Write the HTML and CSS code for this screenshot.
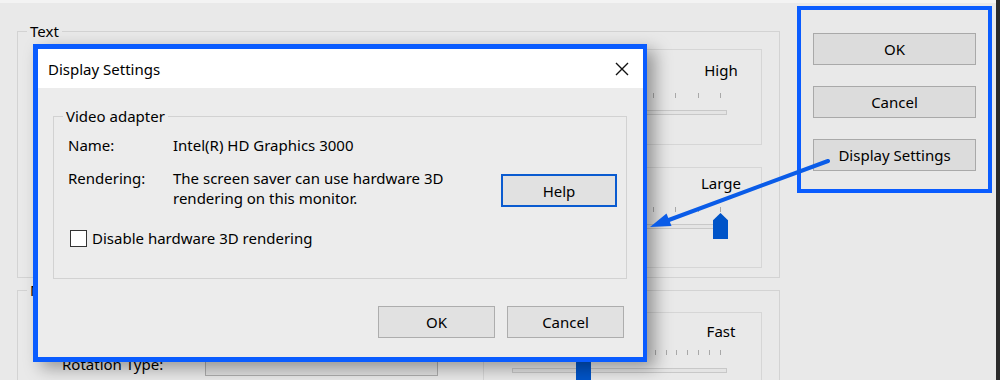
FILE: index.html
```html
<!DOCTYPE html>
<html lang="en">
<head>
<meta charset="utf-8">
<title>Display Settings</title>
<link rel="stylesheet" href="styles.css">
</head>
<body>
<div class="screen">
  <div class="window">
    <div class="main">
      <fieldset class="grp grp-text">
        <legend>Text</legend>
        <div class="grp-col">
          <fieldset class="sub sub-res">
            <legend>Resolution</legend>
            <div class="slider">
              <div class="sl-label">High</div>
              <div class="ticks"></div>
              <div class="track"></div>
            </div>
          </fieldset>
          <fieldset class="sub sub-size">
            <legend>Size</legend>
            <div class="slider">
              <div class="sl-label">Large</div>
              <div class="ticks"></div>
              <div class="track"><span class="thumb thumb-size"></span></div>
            </div>
          </fieldset>
        </div>
      </fieldset>
      <fieldset class="grp grp-motion">
        <legend>Motion</legend>
        <div class="motion-row">
          <div class="rotation">
            <span class="rot-label">Rotation Type:</span>
            <span class="combo"></span>
          </div>
          <fieldset class="sub sub-fast">
            <legend>Speed</legend>
            <div class="slider">
              <div class="sl-label">Fast</div>
              <div class="ticks ticks-fine"></div>
              <div class="track"><span class="thumb thumb-fast"></span></div>
            </div>
          </fieldset>
        </div>
      </fieldset>
    </div>
    <div class="actions">
      <button class="btn">OK</button>
      <button class="btn">Cancel</button>
      <button class="btn">Display Settings</button>
    </div>
    <div class="edge"></div>
  </div>

  <div class="dialog">
    <div class="dlg-title">
      <span>Display Settings</span>
      <svg class="close" width="14" height="14" viewBox="0 0 14 14"><path d="M1 1 L13 13 M13 1 L1 13" stroke="#111" stroke-width="1.4" fill="none"/></svg>
    </div>
    <div class="dlg-body">
      <fieldset class="vgrp">
        <legend>Video adapter</legend>
        <div class="vgrid">
          <span class="k">Name:</span>
          <span class="v">Intel(R) HD Graphics 3000</span>
          <span></span>
          <span class="k">Rendering:</span>
          <span class="v">The screen saver can use hardware 3D rendering on this monitor.</span>
          <button class="btn btn-help">Help</button>
          <label class="chk-row"><span class="chk"></span>Disable hardware 3D rendering</label>
        </div>
      </fieldset>
      <div class="dlg-foot">
        <button class="btn btn-dlg">OK</button>
        <button class="btn btn-dlg">Cancel</button>
      </div>
    </div>
  </div>

  <svg class="arrow" width="1000" height="380" viewBox="0 0 1000 380">
    <path d="M828 161 L668.8 220" stroke="#0a5ce8" stroke-width="4" stroke-linecap="round" fill="none"/>
    <polygon points="650,227 671.5,226 666.5,213.5" fill="#0a5ce8"/>
  </svg>
</div>
</body>
</html>
```
FILE: styles.css
```css
* { box-sizing: border-box; }
html, body { margin: 0; padding: 0; }
body {
  width: 1000px;
  height: 380px;
  overflow: hidden;
  background: linear-gradient(#f3f3f3 0 3px, #e9e9e9 3px);
  font-family: "Noto Sans", "Segoe UI", sans-serif;
  font-size: 15px;
  color: #000;
}
.screen { position: relative; width: 1000px; height: 380px; overflow: hidden; }
.window { display: flex; height: 100%; }

.main { flex: none; width: 780px; padding: 22px 0 0 17px; }

fieldset { margin: 0; min-width: 0; }
legend { margin-left: 9px; padding: 0 3px; line-height: 18px; }

.grp { border: 1px solid #d3d3d3; padding: 0 17px 9px 0; }
.grp-col { display: flex; flex-direction: column; align-items: flex-end; }

.sub { width: 279px; border: 1px solid #d6d6d6; padding: 0; }
.sub-res { padding-bottom: 29px; }
.sub-size { margin-top: 13px; padding-bottom: 38px; }
.sub-size .sl-label { margin-top: -5px; }

.slider { padding: 2px 34px 0 28px; display: flex; flex-direction: column; }
.sub-fast .slider { padding-top: 0; }
.sl-label { width: 60px; margin-left: auto; margin-right: -24px; text-align: center; line-height: 20px; }
.ticks {
  height: 5px;
  margin-top: 13px;
  margin-right: 6px;
  background: repeating-linear-gradient(to left, #a8a8a8 0 1px, transparent 1px 22.4px);
}
.sub-size .ticks { margin-top: 14px; }
.ticks-fine { margin-top: 9px; background: repeating-linear-gradient(to left, #a8a8a8 0 1px, transparent 1px 10.9px); }
.track {
  position: relative;
  height: 5px;
  margin-top: 12px;
  border: 1px solid #c8c8c8;
  background: #e4e4e4;
}
.ticks-fine + .track { margin-top: 13px; }
.thumb {
  position: absolute;
  width: 15px;
  height: 26px;
  background: #0054c8;
  clip-path: polygon(50% 0, 100% 28%, 100% 100%, 0 100%, 0 28%);
}
.thumb-size { right: -2px; top: -12px; }
.thumb-fast { left: 63px; top: -14px; }

.grp-motion { margin-top: 3px; padding-bottom: 40px; }
.motion-row { display: flex; justify-content: space-between; }
.rotation { display: flex; align-items: center; padding: 55px 0 0 44px; height: 75px; }
.rot-label { width: 143px; line-height: 20px; }
.combo { width: 233px; height: 24px; border: 1px solid #adadad; background: #e1e1e1; }
.sub-fast { margin-top: 4px; height: 90px; }

.actions {
  flex: none;
  width: 195px;
  height: 187px;
  margin: 6px 0 0 17px;
  border: 4px solid #0a5cff;
  padding: 23px 12px 0;
  display: flex;
  flex-direction: column;
  gap: 21px;
}
.edge { margin-left: auto; width: 4px; background: #2b2b2b; }

.btn {
  font: inherit;
  color: #000;
  height: 32px;
  background: #dcdcdc;
  border: 1px solid #a9a9a9;
  padding: 0;
}

.dialog {
  position: absolute;
  left: 33px;
  top: 44px;
  width: 614px;
  height: 318px;
  border: solid #0a5cff;
  border-width: 5px 4px 5px 5px;
  background: #ececec;
  display: flex;
  flex-direction: column;
  box-shadow: 8px 6px 16px rgba(0, 0, 0, 0.36);
}
.dlg-title {
  flex: none;
  height: 39px;
  background: #fff;
  display: flex;
  align-items: center;
  justify-content: space-between;
  padding: 0 14px 0 10px;
}
.dlg-body {
  flex: 1;
  display: flex;
  flex-direction: column;
  padding: 19px 16px 19px 15px;
}
.vgrp { border: 1px solid #d2d2d2; padding: 0; }
.vgrid {
  display: grid;
  grid-template-columns: 105px 1fr auto;
  row-gap: 13px;
  line-height: 20px;
  padding: 10px 9px 30px 14px;
}
.v { max-width: 300px; }
.btn-help {
  width: 116px;
  height: 33px;
  align-self: end;
  margin-bottom: 1px;
  background: #e1e1e1;
  border: 2px solid #0a5bd0;
}
.chk-row { grid-column: 1 / -1; display: flex; align-items: center; gap: 5px; margin-top: 7px; }
.chk { width: 17px; height: 17px; margin-left: 2px; border: 1px solid #333; background: #fff; }

.dlg-foot { margin-top: auto; padding-right: 3px; display: flex; justify-content: flex-end; gap: 12px; }
.btn-dlg { width: 117px; background: #e1e1e1; border-color: #adadad; }

.arrow { position: absolute; left: 0; top: 0; pointer-events: none; }
```
